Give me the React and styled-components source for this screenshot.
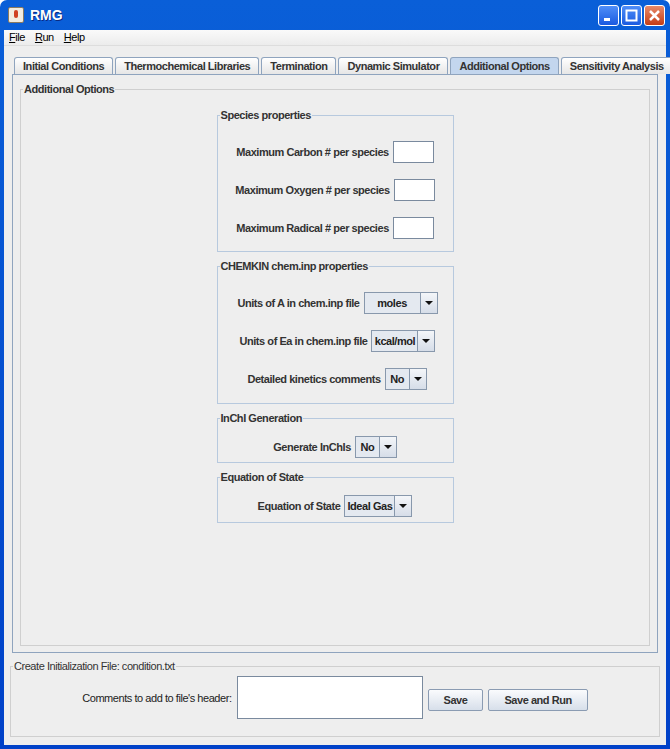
import styled, { createGlobalStyle } from "styled-components";

const Global = createGlobalStyle`
  body { margin: 0; background: #fff; }
  * { box-sizing: border-box; }
`;

const Frame = styled.div`
  width: 670px;
  height: 749px;
  background: linear-gradient(#0a5fd8, #0041c8);
  border-radius: 7px 7px 0 0;
  padding: 0 4px 4px;
  display: flex;
  flex-direction: column;
  font-family: "Liberation Sans", Arial, sans-serif;
  font-size: 11px;
  letter-spacing: -0.45px;
  color: #333;
`;

const TitleBar = styled.div`
  height: 30px;
  display: flex;
  align-items: center;
  gap: 6px;
  padding-left: 4px;
  color: #fff;
  font-size: 14px;
  font-weight: bold;
  letter-spacing: 0;
  text-shadow: 1px 1px #0a2a80;
`;

const AppIcon = styled.div`
  width: 16px;
  height: 16px;
  background: #f2ece0;
  border: 1px solid #8a7a60;
  border-radius: 2px;
  position: relative;
  &::after {
    content: "";
    position: absolute;
    left: 5px; top: 2px;
    width: 4px; height: 8px;
    background: #d04020;
    border-radius: 2px;
  }
`;

const WinButtons = styled.div`
  margin-left: auto;
  display: flex;
  gap: 2px;
  padding-right: 1px;
`;

const WinBtn = styled.div`
  width: 21px;
  height: 21px;
  border: 1px solid #fff;
  border-radius: 3px;
  background: ${(p) => (p.$close ? "linear-gradient(#e88a6a,#c43c16)" : "linear-gradient(#4f8ef8,#1a5ae0)")};
  display: flex;
  align-items: center;
  justify-content: center;
`;

const Body = styled.div`
  flex: 1;
  background: #eeeeee;
  display: flex;
  flex-direction: column;
`;

const MenuBar = styled.div`
  height: 16px;
  display: flex;
  gap: 10px;
  padding: 1px 5px;
  font-size: 11px;
  color: #000;
  background: linear-gradient(#fafafa, #ececec);
  border-bottom: 1px solid #ddd;
  span::first-letter { text-decoration: underline; }
`;

const Tabs = styled.div`
  display: flex;
  margin: 11px 0 0 10px;
  height: 17px;
  align-items: flex-end;
`;

const Tab = styled.div`
  height: 17px;
  padding: 0 8px;
  margin-right: 2px;
  white-space: nowrap;
  border: 1px solid #8fa4be;
  border-bottom: none;
  border-radius: 3px 3px 0 0;
  background: ${(p) => (p.$active ? "#c3d6ee" : "linear-gradient(#fff,#e6e6e6)")};
  font-weight: bold;
  display: flex;
  align-items: center;
  color: #333;
`;

const TabPanel = styled.div`
  margin: 0 8px;
  height: 579px;
  border: 1px solid #8fa4be;
  padding: 8px 7px 6px;
`;

const Group = styled.fieldset`
  margin: 0;
  padding: 0;
  border: 1px solid ${(p) => (p.$blue ? "#b7c9de" : "#cfcfcf")};
  min-width: 0;
  legend {
    padding: 0 1px;
    margin-left: 2px;
    font-weight: bold;
    font-size: 11px;
    color: #333;
  }
`;

const OuterGroup = styled(Group)`
  height: 100%;
  display: flex;
  flex-direction: column;
  align-items: center;
`;

const Column = styled.div`
  width: 237px;
  margin-top: 14px;
  display: flex;
  flex-direction: column;
  gap: 8px;
`;

const Section = styled(Group)`
  flex-shrink: 0;
  height: ${(p) => p.$h}px;
  padding: ${(p) => p.$pt}px 0 0;
  display: flex;
  flex-direction: column;
  align-items: center;
  gap: 16px;
`;

const Row = styled.div`
  display: flex;
  align-items: center;
  gap: 4px;
  font-weight: bold;
  height: 22px;
  white-space: nowrap;
  margin-left: ${(p) => p.$shift || 0}px;
`;

const TextField = styled.div`
  flex-shrink: 0;
  width: ${(p) => p.$w || 41}px;
  height: ${(p) => p.$h || 22}px;
  background: #fff;
  border: 1px solid #7a8a9e;
`;

const Combo = styled.div`
  display: flex;
  height: 22px;
  border: 1px solid #8898ac;
  background: #e4e9f0;
`;

const ComboText = styled.div`
  width: ${(p) => p.$w}px;
  display: flex;
  align-items: center;
  justify-content: center;
  font-weight: bold;
  color: #222;
  border-right: 1px solid #8898ac;
`;

const Arrow = styled.div`
  width: 16px;
  display: flex;
  align-items: center;
  justify-content: center;
  background: linear-gradient(#f4f6f9, #d6dde8);
  &::after {
    content: "";
    border-left: 4px solid transparent;
    border-right: 4px solid transparent;
    border-top: 4px solid #111;
  }
`;

const BottomGroup = styled(Group)`
  margin: 7px 6px 5px;
  height: 77px;
  display: flex;
  justify-content: center;
  align-items: center;
  gap: 5px;
  padding-top: 4px;
  legend { font-weight: normal; }
`;

const Label = styled.span`
  font-size: 11px;
  color: #222;
`;

const Button = styled.div`
  height: 22px;
  padding: 0 15px;
  border: 1px solid #8a9bb2;
  border-radius: 2px;
  background: linear-gradient(#fafbfd, #d7dfea);
  font-weight: bold;
  display: flex;
  align-items: center;
  margin-top: 4px;
`;

const Select = ({ value, w }) => (
  <Combo>
    <ComboText $w={w}>{value}</ComboText>
    <Arrow />
  </Combo>
);

export default function App() {
  return (
    <Frame>
      <Global />
      <TitleBar>
        <AppIcon />
        RMG
        <WinButtons>
          <WinBtn><svg width="11" height="11"><rect x="1" y="8" width="6" height="3" fill="#fff" /></svg></WinBtn>
          <WinBtn><svg width="13" height="13"><rect x="1.5" y="1.5" width="10" height="10" fill="none" stroke="#fff" strokeWidth="2" /></svg></WinBtn>
          <WinBtn $close><svg width="13" height="13"><path d="M2 2L11 11M11 2L2 11" stroke="#fff" strokeWidth="2.5" /></svg></WinBtn>
        </WinButtons>
      </TitleBar>
      <Body>
        <MenuBar><span>File</span><span>Run</span><span>Help</span></MenuBar>
        <Tabs>
          <Tab>Initial Conditions</Tab>
          <Tab>Thermochemical Libraries</Tab>
          <Tab>Termination</Tab>
          <Tab>Dynamic Simulator</Tab>
          <Tab $active>Additional Options</Tab>
          <Tab>Sensitivity Analysis</Tab>
        </Tabs>
        <TabPanel>
          <OuterGroup>
            <legend>Additional Options</legend>
            <Column>
              <Section $blue $h={143} $pt={20}>
                <legend>Species properties</legend>
                <Row>Maximum Carbon # per species<TextField /></Row>
                <Row>Maximum Oxygen # per species<TextField /></Row>
                <Row>Maximum Radical # per species<TextField /></Row>
              </Section>
              <Section $blue $h={144} $pt={20}>
                <legend>CHEMKIN chem.inp properties</legend>
                <Row $shift={5}>Units of A in chem.inp file<Select value="moles" w={56} /></Row>
                <Row $shift={5}>Units of Ea in chem.inp file<Select value="kcal/mol" w={46} /></Row>
                <Row $shift={4}>Detailed kinetics comments<Select value="No" w={24} /></Row>
              </Section>
              <Section $blue $h={51} $pt={12}>
                <legend>InChI Generation</legend>
                <Row>Generate InChIs<Select value="No" w={24} /></Row>
              </Section>
              <Section $blue $h={52} $pt={12}>
                <legend>Equation of State</legend>
                <Row>Equation of State<Select value="Ideal Gas" w={50} /></Row>
              </Section>
            </Column>
          </OuterGroup>
        </TabPanel>
        <BottomGroup>
          <legend>Create Initialization File: condition.txt</legend>
          <Label>Comments to add to file's header:</Label>
          <TextField $w={186} $h={43} />
          <Button>Save</Button>
          <Button>Save and Run</Button>
        </BottomGroup>
      </Body>
    </Frame>
  );
}
